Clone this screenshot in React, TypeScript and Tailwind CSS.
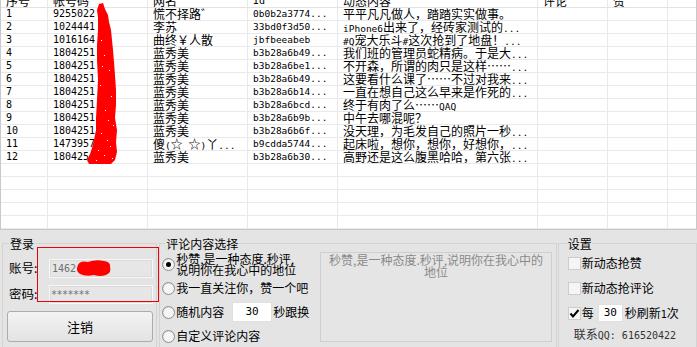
import React from "react";

const rows: string[][] = [
  ["1", "9255022", "慌不择路゛", "0b0b2a3774...", "平平凡凡做人，踏踏实实做事。"],
  ["2", "1024441", "李苏", "33bd0f3d50...", "iPhone6出来了，经砖家测试的..."],
  ["3", "1016164", "曲终￥人散", "jbfbeeabeb", "#Q宠大乐斗#这次抢到了地盘！..."],
  ["4", "1804251", "蓝秀美", "b3b28a6b49...", "我们班的管理员蛇精病。于是大..."],
  ["5", "1804251", "蓝秀美", "b3b28a6be1...", "不开森，所谓的肉只是这样……..."],
  ["6", "1804251", "蓝秀美", "b3b28a6b49...", "这要看什么课了……不过对我来..."],
  ["7", "1804251", "蓝秀美", "b3b28a6b14...", "一直在想自己这么早来是作死的..."],
  ["8", "1804251", "蓝秀美", "b3b28a6bcd...", "终于有肉了么……QAQ"],
  ["9", "1804251", "蓝秀美", "b3b28a6b9b...", "中午去哪混呢？"],
  ["10", "1804251", "蓝秀美", "b3b28a6b6f...", "没天理，为毛发自己的照片一秒..."],
  ["11", "1473957", "傻(☆_☆)丫...", "b9cdda5744...", "起床啦，想你，想你，好想你，..."],
  ["12", "180425", "蓝秀美", "b3b28a6b30...", "高野还是这么腹黑哈哈，第六张..."],
];

function Mixed({ text }: { text: string }) {
  const parts = text.match(/[\x20-\x7e]+|[^\x20-\x7e]+/g) || [];
  return (
    <>
      {parts.map((p, i) =>
        /^[\x20-\x7e]+$/.test(p) ? (
          <span key={i} className="font-['DejaVu_Sans_Mono',monospace] text-[9.5px]">
            {p}
          </span>
        ) : (
          <span key={i}>{p}</span>
        )
      )}
    </>
  );
}

const gridCols = "grid grid-cols-[47px_100px_100px_90px_200px_70px_60px_1fr]";
const cell = "overflow-hidden whitespace-nowrap border-r border-[#e9e9e9] pl-[5px]";

function Radio({ checked }: { checked?: boolean }) {
  return (
    <span className="flex h-[13px] w-[13px] shrink-0 items-center justify-center rounded-full border border-[#8e8e8e] bg-[linear-gradient(135deg,#d6d6d6,#fdfdfd)]">
      <span className="flex h-[9px] w-[9px] items-center justify-center rounded-full bg-[#f6f6f6]">
        {checked && <span className="h-[5px] w-[5px] rounded-full bg-black" />}
      </span>
    </span>
  );
}

function Check({ checked }: { checked?: boolean }) {
  return (
    <span className="flex h-[13px] w-[13px] shrink-0 items-center justify-center border border-[#cdcdcd] bg-[#f5f5f5]">
      {checked && (
        <svg width="11" height="11" viewBox="0 0 11 11">
          <path d="M1.5 5.5 L4 8.5 L9.5 2" stroke="#000" strokeWidth="2" fill="none" />
        </svg>
      )}
    </span>
  );
}

const specks: [number, number][] = [
  [100, 40], [103, 55], [108, 70], [99, 85], [110, 96], [104, 110], [112, 125], [100, 133],
  [106, 140], [109, 146], [97, 150], [103, 155], [111, 158], [95, 160], [107, 120], [101, 66],
];

export default function App() {
  return (
    <div className="h-[347px] w-[697px] overflow-hidden bg-[#e4e4e4] font-['Noto_Sans_CJK_SC',sans-serif] text-[12px] text-black">
      {/* table */}
      <div className="relative h-[230px] overflow-hidden border-b border-l border-r border-[#c9c9c9] bg-white">
        <div className="mt-[-12px]">
          <div className={`${gridCols} h-[20px] border-b border-[#e3e3e3] leading-[13px]`}>
            <div className={`${cell} flex items-end pl-[4px]`}>序号</div>
            <div className={`${cell} flex items-end`}>帐号码</div>
            <div className={`${cell} flex items-end`}>网名</div>
            <div className={`${cell} flex items-end`}>
              <span className="font-['DejaVu_Sans_Mono',monospace] text-[10px]">Id</span>
            </div>
            <div className={`${cell} flex items-end`}>动态内容</div>
            <div className={`${cell} flex items-end`}>评论</div>
            <div className={`${cell} flex items-end`}>赞</div>
            <div />
          </div>
          {Array.from({ length: 17 }).map((_, i) => {
            const r = rows[i];
            return (
              <div key={i} className={`${gridCols} h-[13px] border-b border-[#e9e9e9] leading-[12px]`}>
                <div className={`${cell} pl-[4px] font-['DejaVu_Sans_Mono',monospace] text-[10px]`}>{r ? r[0] : ""}</div>
                <div className={`${cell} font-['DejaVu_Sans_Mono',monospace] text-[10px]`}>{r ? r[1] : ""}</div>
                <div className={cell}>{r ? <Mixed text={r[2]} /> : ""}</div>
                <div className={`${cell} font-['DejaVu_Sans_Mono',monospace] text-[9.5px]`}>{r ? r[3] : ""}</div>
                <div className={cell}>{r ? <Mixed text={r[4]} /> : ""}</div>
                <div className={cell} />
                <div className={cell} />
                <div />
              </div>
            );
          })}
        </div>
        <svg className="pointer-events-none absolute left-0 top-0" width="697" height="230" viewBox="0 0 697 230">
          <path
            d="M98 4 L102 3 L104 9 L107 15 L108 22 L110 30 L111 40 L112 50 L113 62 L114 75 L115 90 L115 105 L114 118 L116 130 L115 142 L116 152 L114 160 L110 164 L100 164 L88 164 L86 160 L89 154 L91 148 L93 140 L95 130 L95 118 L96 100 L97 80 L96 60 L96 45 L97 30 L97 18 L96 10 Z"
            fill="#ff0000"
          />
          {specks.map(([x, y], i) => (
            <rect key={i} x={x} y={y} width="1" height="1" fill="#ffffff" />
          ))}
        </svg>
      </div>

      {/* bottom panel */}
      <div className="relative flex h-[117px] items-start">
        {/* login */}
        <fieldset className="ml-[2px] mt-[7px] h-[125px] w-[156px] min-w-0 border border-[#d3d3d3] pb-0 pl-[6px] pr-0 pt-0">
          <legend className="px-[1px] text-[12px] leading-[13px]">登录</legend>
          <div className="flex flex-col pt-[9px]">
            <div className="flex h-[19px] items-center">
              <span className="w-[40px] text-[12.5px]">账号:</span>
              <div className="flex h-[19px] w-[104px] items-center border border-[#f7f7f7] bg-[#e6e6e6] pl-[2px] text-[#707070] shadow-[inset_0_0_0_1px_#dadada]">
                <span className="font-['DejaVu_Sans_Mono',monospace] text-[10px]">1462</span>
              </div>
            </div>
            <div className="mt-[7px] flex h-[19px] items-center">
              <span className="w-[40px] text-[12.5px]">密码:</span>
              <div className="flex h-[19px] w-[104px] items-center border border-[#f7f7f7] bg-[#e6e6e6] pl-[1px] text-[#707070] shadow-[inset_0_0_0_1px_#dadada]">
                <span className="font-['DejaVu_Sans_Mono',monospace] text-[10px] tracking-[-0.5px]">*******</span>
              </div>
            </div>
            <button className="ml-[-2px] mt-[7px] flex h-[31px] w-[146px] items-center justify-center rounded-[3px] border border-[#acacac] bg-[linear-gradient(#f3f3f3,#e3e3e3)] text-[13px]">
              注销
            </button>
          </div>
        </fieldset>

        {/* comment select */}
        <fieldset className="ml-[2px] mt-[7px] h-[125px] w-[400px] min-w-0 border border-[#d3d3d3] pb-0 pl-[2px] pr-0 pt-0">
          <legend className="ml-[3px] px-[1px] text-[12px] leading-[13px]">评论内容选择</legend>
          <div className="flex pt-[2px]">
            <div className="flex w-[158px] flex-col">
              <div className="flex h-[24px] items-center">
                <Radio checked />
                <span className="ml-[1px] whitespace-pre leading-[11.5px]">
                  {"秒赞,是一种态度.秒评,\n说明你在我心中的地位"}
                </span>
              </div>
              <div className="mt-[4px] flex h-[16px] items-center">
                <Radio />
                <span className="ml-[1px] whitespace-nowrap">我一直关注你，赞一个吧</span>
              </div>
              <div className="mt-[6px] flex h-[20px] items-center">
                <Radio />
                <span className="ml-[1px] w-[56px] whitespace-nowrap">随机内容</span>
                <div className="flex h-[20px] w-[40px] items-center justify-center border border-[#e0e0e0] bg-white font-['DejaVu_Sans_Mono',monospace] text-[11px]">
                  30
                </div>
                <span className="ml-[1px] whitespace-nowrap">秒跟换</span>
              </div>
              <div className="mt-[6px] flex h-[16px] items-center">
                <Radio />
                <span className="ml-[1px] whitespace-nowrap">自定义评论内容</span>
              </div>
            </div>
            <div className="h-[90px] w-[232px] border border-[#cfcfcf] bg-[#e5e5e5] px-[4px] pt-[1px] text-center leading-[11.5px] text-[#8a8a8a]">
              秒赞,是一种态度.秒评,说明你在我心中的地位
            </div>
          </div>
        </fieldset>

        {/* settings */}
        <fieldset className="ml-[1px] mt-[7px] h-[125px] w-[140px] min-w-0 border border-[#d3d3d3] pb-0 pl-[9px] pr-0 pt-0">
          <legend className="px-0 text-[12px] leading-[13px]">设置</legend>
          <div className="flex flex-col pt-[5px]">
            <div className="flex h-[16px] items-center">
              <Check />
              <span className="ml-[1px] whitespace-nowrap">新动态抢赞</span>
            </div>
            <div className="mt-[9px] flex h-[16px] items-center">
              <Check />
              <span className="ml-[1px] whitespace-nowrap">新动态抢评论</span>
            </div>
            <div className="mt-[8px] flex h-[18px] items-center">
              <Check checked />
              <span className="ml-[1px] w-[16px] whitespace-nowrap">每</span>
              <div className="flex h-[18px] w-[25px] items-center justify-center border border-[#e0e0e0] bg-white font-['DejaVu_Sans_Mono',monospace] text-[11px]">
                30
              </div>
              <span className="ml-[2px] whitespace-nowrap">
                秒刷新<span className="font-['DejaVu_Sans_Mono',monospace] text-[10px]">1</span>次
              </span>
            </div>
            <div className="mt-[4px] flex h-[16px] items-center pl-[6px] text-[#333]">
              <span className="whitespace-nowrap">
                联系<span className="font-['DejaVu_Sans_Mono',monospace] text-[10px]">QQ: 616520422</span>
              </span>
            </div>
          </div>
        </fieldset>

        {/* overlays */}
        <div className="pointer-events-none absolute left-[37px] top-[17px] h-[55px] w-[122px] border border-[#f00000]" />
        <svg className="pointer-events-none absolute left-0 top-0" width="200" height="117" viewBox="0 0 200 117">
          <path
            d="M78 35 Q80 30 88 32 Q96 29 104 31 Q111 32 110 37 Q112 42 106 45 Q100 47 94 45 Q86 47 80 44 Q75 41 78 35 Z"
            fill="#ff0000"
          />
        </svg>
      </div>
    </div>
  );
}
